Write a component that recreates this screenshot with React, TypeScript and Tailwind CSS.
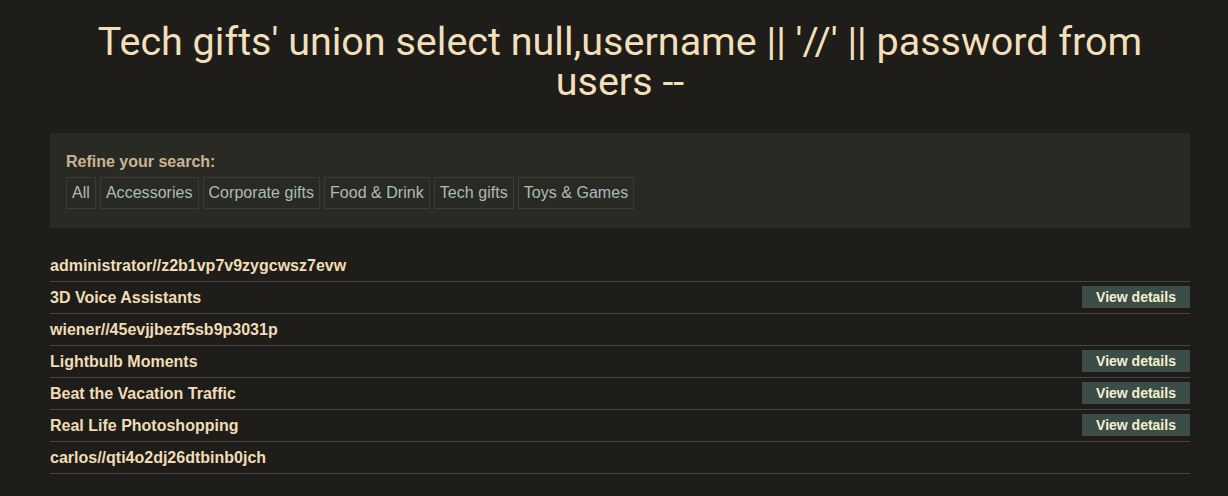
const categories = ["All", "Accessories", "Corporate gifts", "Food & Drink", "Tech gifts", "Toys & Games"];

const rows: { name: string; details?: boolean }[] = [
  { name: "administrator//z2b1vp7v9zygcwsz7evw" },
  { name: "3D Voice Assistants", details: true },
  { name: "wiener//45evjjbezf5sb9p3031p" },
  { name: "Lightbulb Moments", details: true },
  { name: "Beat the Vacation Traffic", details: true },
  { name: "Real Life Photoshopping", details: true },
  { name: "carlos//qti4o2dj26dtbinb0jch" },
];

export default function App() {
  return (
    <div
      className="min-h-[496px] bg-[#1e1d1a] pl-[50px] pr-[38px] pt-[22px]"
      style={{ fontFamily: '"Liberation Sans", Arial, sans-serif' }}
    >
      {/* Heading */}
      <h1
        className="text-center text-[39.5px] leading-[40px] text-[#f3dfb9]"
        style={{ fontFamily: '"Liberation Sans Narrow", Roboto, sans-serif' }}
      >
        Tech gifts' union select null,username || '//' || password from users --
      </h1>

      {/* Filter panel */}
      <section className="mt-[31px] bg-[#2a2a25] px-4 pt-[19px] pb-[19px]">
        <p className="text-base font-bold leading-5 text-[#c9b592]">Refine your search:</p>
        <div className="mt-[5px] flex gap-1">
          {categories.map((c) => (
            <a
              key={c}
              className="border border-[#3d3b33] px-[5px] py-[5px] text-base leading-5 tracking-[0.035px] text-[#a9bdb8]"
            >
              {c}
            </a>
          ))}
        </div>
      </section>

      {/* Results */}
      <table className="mt-[21px] w-full border-collapse">
        <tbody>
          {rows.map((r, i) => (
            <tr key={i} className="border-b border-[#4a4843]">
              <th className="h-[32px] p-0 pt-[2px] text-left text-base font-bold text-[#f0dcb6]">{r.name}</th>
              <td className="p-0 text-right">
                {r.details && (
                  <a className="inline-block h-[22px] w-[108px] bg-[#3b4c49] text-center text-sm font-bold leading-[22px] text-[#f6f1cc]">
                    View details
                  </a>
                )}
              </td>
            </tr>
          ))}
        </tbody>
      </table>
    </div>
  );
}
